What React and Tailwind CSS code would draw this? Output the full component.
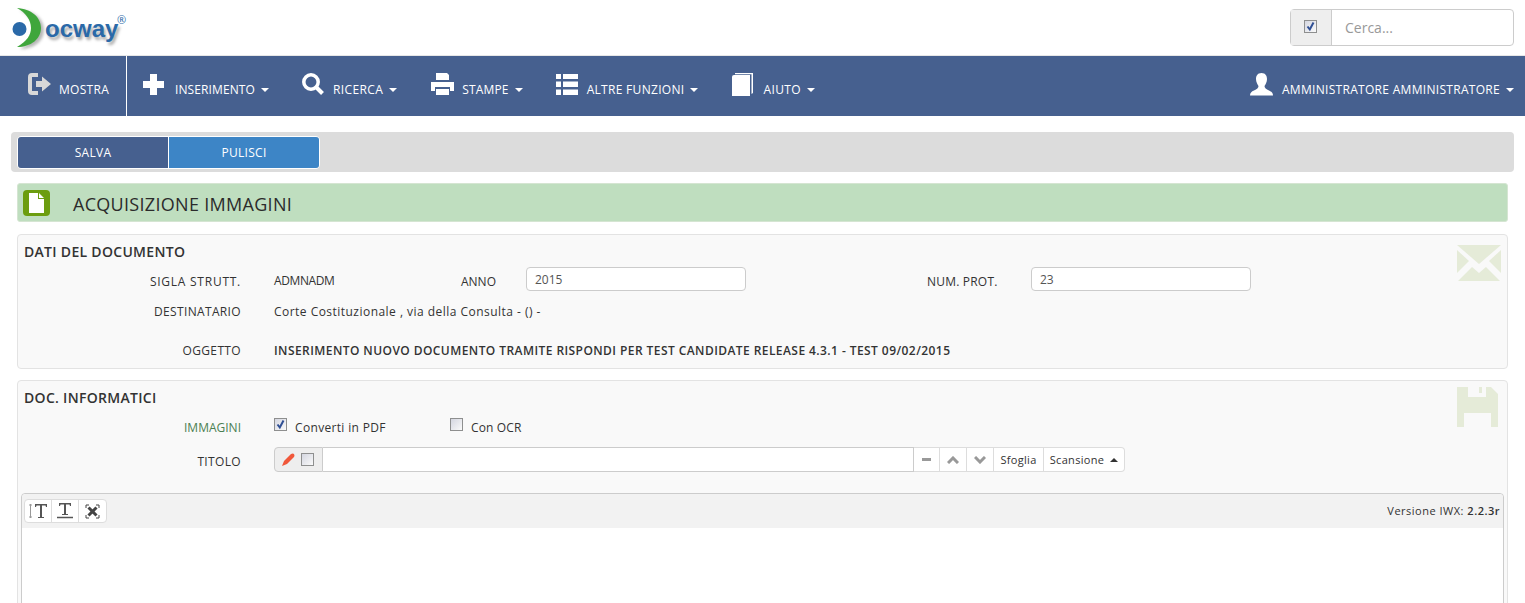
const font = "font-['Open_Sans','Noto_Sans',sans-serif]";

function Caret({ up }) {
  return (
    <span
      className={`ml-[6px] inline-block h-0 w-0 border-x-[4px] border-x-transparent ${
        up ? 'border-b-[4px] border-b-[#333]' : 'border-t-[4px] border-t-white'
      }`}
    />
  );
}

function Logo() {
  return (
    <div className="relative h-[55px] w-[130px]">
      <svg width="130" height="55" viewBox="0 0 130 55" className="absolute left-0 top-0">
        <defs>
          <filter id="logoShadow" x="-20%" y="-20%" width="140%" height="140%">
            <feGaussianBlur stdDeviation="1.6" />
          </filter>
        </defs>
        <path d="M20 10 C34 11 44 19 44 30 C44 41 34 49 20 49 C30 43 34 37 34 30 C34 22 29 15 20 10Z" fill="#999" filter="url(#logoShadow)" opacity="0.7" />
        <path d="M17 8 C31 9 41 17 41 28 C41 39 31 47 17 47 C27 41 31 35 31 28 C31 20 26 13 17 8Z" fill="#3fa63c" />
        <circle cx="19.500" cy="29" r="7" fill="#2a69a8" />
      </svg>
      <span className="absolute left-[45px] top-[16px] font-['Liberation_Sans',sans-serif] text-[24px] font-bold leading-[26px] text-[#2a69a8] [text-shadow:2px_3px_3px_#aaa]">
        ocway
      </span>
      <span className="absolute left-[117px] top-[14px] text-[11px] leading-[12px] text-[#2a69a8]">®</span>
    </div>
  );
}

function NavIcon({ children, className }) {
  return <span className={`-mt-[4px] flex h-[30px] items-center justify-center ${className}`}>{children}</span>;
}

function NavItem({ icon, label, className, textClass, caret = true }) {
  return (
    <div className={`flex items-center ${className}`}>
      {icon}
      <span className={`mt-[8px] flex items-center text-[12px] leading-[16px] text-white ${textClass}`}>
        {label}
        {caret && <Caret />}
      </span>
    </div>
  );
}

function Checkbox({ checked, className = '' }) {
  return (
    <span className={`flex h-[13px] w-[13px] items-center justify-center border border-[#8e8f8f] bg-gradient-to-br from-[#d4d6e0] to-[#fafafa] ${className}`}>
      {checked && (
        <svg width="11" height="11" viewBox="0 0 11 11">
          <path d="M2.500 5.500 L4.800 8.500 L8.500 1.500" fill="none" stroke="#2f4f94" strokeWidth="2" />
        </svg>
      )}
    </span>
  );
}

function Label({ children, className = 'text-[#333] tracking-[0.35px]' }) {
  return <div className={`w-[223px] shrink-0 text-right text-[12px] leading-[16px] ${className}`}>{children}</div>;
}

function ValueInput({ value }) {
  return (
    <div className="flex h-[24px] w-[220px] items-center rounded-[4px] border border-[#ccc] bg-white px-[8px] pt-[1px] text-[12px] text-[#555]">
      {value}
    </div>
  );
}

function SmallBtn({ children, className = '' }) {
  return (
    <div className={`flex h-[25px] items-center justify-center border-y border-r border-[#ddd] bg-white ${className}`}>
      {children}
    </div>
  );
}

export default function App() {
  return (
    <div className={`h-screen overflow-hidden bg-white text-[#333] ${font}`}>
      <header className="flex h-[56px] items-start justify-between border-b border-[#e7e7e7] pr-[11px]">
        <Logo />
        <div className="mt-[9px] flex h-[37px] w-[224px] rounded-[4px] border border-[#ccc]">
          <div className="flex w-[41px] items-center justify-center border-r border-[#ccc] bg-[#eee] pb-[3px] pr-[2px]">
            <Checkbox checked />
          </div>
          <div className="flex flex-1 items-center pl-[13px] text-[14px] text-[#999]">Cerca...</div>
        </div>
      </header>

      <nav className="flex h-[60px] items-center justify-between bg-[#46608f] pr-[11px]">
        <div className="flex h-full items-center">
          <div className="flex h-full w-[127px] items-center border-r border-white pl-[27px]">
            <NavItem
              label="MOSTRA"
              caret={false}
              textClass="tracking-[0.3px]"
              icon={
                <NavIcon className="mr-[7px]">
                  <svg width="25" height="22" viewBox="0 0 25 22">
                    <path d="M11 2H5Q3 2 3 4V18Q3 20 5 20H11" fill="none" stroke="#d8d8d8" strokeWidth="4" />
                    <path d="M9 8H15V3.500L24 11L15 18.500V14H9Z" fill="#d8d8d8" />
                  </svg>
                </NavIcon>
              }
            />
          </div>
          <NavItem
            className="ml-[16px]"
            label="INSERIMENTO"
            textClass="tracking-[0.1px]"
            icon={
              <NavIcon className="mr-[11px]">
                <svg width="21" height="21" viewBox="0 0 21 21" fill="#fff">
                  <path d="M7 0H14V7H21V14H14V21H7V14H0V7H7Z" />
                </svg>
              </NavIcon>
            }
          />
          <NavItem
            className="ml-[32px]"
            label="RICERCA"
            textClass="tracking-[0.4px]"
            icon={
              <NavIcon className="mr-[9px]">
                <svg width="23" height="22" viewBox="0 0 23 22" fill="none" stroke="#fff">
                  <circle cx="10" cy="9" r="7.200" strokeWidth="3.500" />
                  <path d="M15.500 14.500L21.500 20.500" strokeWidth="4" />
                </svg>
              </NavIcon>
            }
          />
          <NavItem
            className="ml-[34px]"
            label="STAMPE"
            textClass="tracking-[0.15px]"
            icon={
              <NavIcon className="mr-[8px]">
                <svg width="23" height="22" viewBox="0 0 23 22" fill="#fff">
                  <path d="M5 0H16L18 2V7H5Z" />
                  <path d="M0 9H23V18H19V14H4V18H0Z" />
                  <path d="M5 16H18V22H5Z" />
                </svg>
              </NavIcon>
            }
          />
          <NavItem
            className="ml-[33px]"
            label="ALTRE FUNZIONI"
            textClass="tracking-[0.3px]"
            icon={
              <NavIcon className="mr-[9px]">
                <svg width="22" height="21" viewBox="0 0 22 21" fill="#fff">
                  <path d="M0 0H5V5H0ZM7 0H22V5H7ZM0 7.500H5V13H0ZM7 7.500H22V13H7ZM0 15.500H5V21H0ZM7 15.500H22V21H7Z" />
                </svg>
              </NavIcon>
            }
          />
          <NavItem
            className="ml-[34px]"
            label="AIUTO"
            textClass="tracking-[0.4px]"
            icon={
              <NavIcon className="mr-[10px]">
                <svg width="21" height="23" viewBox="0 0 21 23" fill="#fff">
                  <path d="M0 4Q0 2 2 2H18V23H0Z" />
                  <path d="M3 0H21V20L19.500 21V1.200H3Z" />
                </svg>
              </NavIcon>
            }
          />
        </div>
        <NavItem
          label="AMMINISTRATORE AMMINISTRATORE"
          textClass="tracking-[0.3px]"
          icon={
            <NavIcon className="mr-[9px]">
              <svg width="23" height="23" viewBox="0 0 23 23" fill="#fff">
                <path d="M11.500 0C7.500 0 6 3 6 6C6 9 7.500 11.500 8.500 13C8.500 15 7 16 4 17.500C1.500 18.500 0 20 0 22.500H23C23 20 21.500 18.500 19 17.500C16 16 14.500 15 14.500 13C15.500 11.500 17 9 17 6C17 3 15.500 0 11.500 0Z" />
              </svg>
            </NavIcon>
          }
        />
      </nav>

      <div className="mx-[11px] mt-[16px] flex h-[40px] w-[1503px] items-start rounded-[4px] bg-[#dcdcdc] pl-[6px] pt-[4px]">
        <div className="flex h-[33px] w-[303px] overflow-hidden rounded-[4px] border border-white pt-0 text-[12px] tracking-[0.3px] text-white">
          <div className="flex w-[151px] items-center justify-center border-r border-white bg-[#46608f] pt-[1px]">SALVA</div>
          <div className="flex flex-1 items-center justify-center bg-[#3d85c6] pt-[1px]">PULISCI</div>
        </div>
      </div>

      <main className="mx-[17px] w-[1491px]">
        <div className="mt-[11px] flex h-[39px] items-center rounded-[3px] border border-[#d5e5d2] bg-[#bfdebf] pl-[5px]">
          <div className="flex h-[26px] w-[27px] items-center justify-center rounded-[4px] bg-[#6c9d0f]">
            <svg width="15" height="20" viewBox="0 0 15 20">
              <path d="M0 0H9V6H15V20H0ZM10 0L15 5H10Z" fill="#fff" />
            </svg>
          </div>
          <h1 className="ml-[23px] mt-[2px] text-[18px] leading-[24px] tracking-[0.3px] text-[#2b2b2b]">ACQUISIZIONE IMMAGINI</h1>
        </div>

        <section className="relative mt-[12px] h-[135px] rounded-[4px] border border-[#e3e3e3] bg-[#f9f9f9]">
          <svg width="44" height="36" viewBox="0 0 44 36" className="absolute right-[6px] top-[10px]" fill="#e5ebd8">
            <path d="M0 0H44L22 19Z" />
            <path d="M0 5L12 16L0 28Z" />
            <path d="M44 5L32 16L44 28Z" />
            <path d="M1 36L15 22L22 28L29 22L43 36Z" />
          </svg>
          <h2 className="pl-[6px] pt-[8px] text-[14px] font-semibold leading-[18px] tracking-[0.3px] text-[#333]">DATI DEL DOCUMENTO</h2>
          <div className="mt-[6px] flex h-[24px] items-center">
            <Label className="pt-[5px] tracking-[0.75px] text-[#333]">SIGLA STRUTT.</Label>
            <span className="ml-[33px] w-[187px] pt-[4px] text-[12px] leading-[16px] tracking-[-0.4px]">ADMNADM</span>
            <span className="w-[65px] pt-[6px] text-[12px] leading-[16px]">ANNO</span>
            <ValueInput value="2015" />
            <span className="ml-[181px] w-[104px] pt-[6px] text-[12px] leading-[16px] tracking-[0.2px]">NUM. PROT.</span>
            <ValueInput value="23" />
          </div>
          <div className="mt-[12px] flex items-center">
            <Label>DESTINATARIO</Label>
            <span className="ml-[33px] text-[12px] tracking-[0.47px]">Corte Costituzionale , via della Consulta - () -</span>
          </div>
          <div className="mt-[21px] flex items-center">
            <Label>OGGETTO</Label>
            <span className="ml-[33px] text-[12px] font-semibold tracking-[0.43px]">
              INSERIMENTO NUOVO DOCUMENTO TRAMITE RISPONDI PER TEST CANDIDATE RELEASE 4.3.1 - TEST 09/02/2015
            </span>
          </div>
        </section>

        <section className="relative mt-[11px] h-[300px] rounded-[4px] border border-[#e3e3e3] bg-[#f9f9f9]">
          <svg width="41" height="40" viewBox="0 0 41 40" className="absolute right-[9px] top-[6px]" fill="#e5ebd8">
            <path d="M0 0H11V10H29V0H34L41 7V40H34V26H7V40H0Z" />
            <path d="M22 0H25V6H22Z" />
          </svg>
          <h2 className="pl-[6px] pt-[8px] text-[14px] font-semibold leading-[18px] tracking-[0.3px] text-[#333]">DOC. INFORMATICI</h2>
          <div className="mt-[12px] flex items-center">
            <Label className="text-[#4b7f52]">IMMAGINI</Label>
            <div className="ml-[33px] flex items-center">
              <Checkbox checked className="-mt-[7px]" />
              <span className="ml-[8px] w-[155px] text-[12px] tracking-[0.33px]">Converti in PDF</span>
              <Checkbox className="-mt-[7px]" />
              <span className="ml-[8px] text-[12px] tracking-[0.15px]">Con OCR</span>
            </div>
          </div>
          <div className="mt-[10px] flex items-center">
            <Label className="pt-[4px] tracking-[0.35px] text-[#333]">TITOLO</Label>
            <div className="ml-[33px] flex items-center">
              <div className="flex h-[25px] w-[49px] items-center gap-[6px] rounded-l-[4px] border border-[#ccc] bg-[#eee] pl-[7px]">
                <svg width="13" height="13" viewBox="0 0 13 13">
                  <path d="M0 13L2 8L9 1Q11 0 12 1Q13 3 12 4L5 11Z" fill="#f0573a" />
                </svg>
                <Checkbox />
              </div>
              <div className="h-[25px] w-[591px] border-y border-r border-[#ccc] bg-white" />
              <SmallBtn className="w-[26px]">
                <span className="h-[3px] w-[9px] bg-[#999]" />
              </SmallBtn>
              <SmallBtn className="w-[27px]">
                <svg width="12" height="8" viewBox="0 0 12 8">
                  <path d="M1 7L6 2L11 7" fill="none" stroke="#999" strokeWidth="3" />
                </svg>
              </SmallBtn>
              <SmallBtn className="w-[27px]">
                <svg width="12" height="8" viewBox="0 0 12 8">
                  <path d="M1 1L6 6L11 1" fill="none" stroke="#999" strokeWidth="3" />
                </svg>
              </SmallBtn>
              <SmallBtn className="w-[50px] border-l-[#ccc] pt-[1px] text-[11px] tracking-[0.3px]">Sfoglia</SmallBtn>
              <SmallBtn className="w-[81px] rounded-r-[4px] border-[#ccc] pt-[1px] text-[11px] tracking-[0.3px]">
                Scansione
                <Caret up />
              </SmallBtn>
            </div>
          </div>

          <div className="mx-[3px] mt-[21px] h-[200px] rounded-t-[4px] border border-[#ccc] bg-white">
            <div className="flex h-[34px] items-start justify-between rounded-t-[4px] bg-[#f2f2f2] pl-[2px] pr-[3px] pt-[5px]">
              <div className="flex h-[24px] rounded-[4px] border border-[#ddd] bg-white">
                <div className="flex w-[27px] items-center justify-center border-r border-[#ddd]">
                  <svg width="20" height="16" viewBox="0 0 20 16">
                    <path d="M2.500 1V15M1 2H4M1 14H4" fill="none" stroke="#999" />
                    <path d="M7 1H19V4H18L17.500 2.500H14V14H16V15H10V14H12V2.500H8.500L8 4H7Z" fill="#555" />
                  </svg>
                </div>
                <div className="flex w-[27px] items-center justify-center border-r border-[#ddd]">
                  <svg width="18" height="16" viewBox="0 0 18 16">
                    <path d="M3 0H15V3H14L13.500 1.500H10V11H12V12H6V11H8V1.500H4.500L4 3H3Z" fill="#555" />
                    <path d="M1 14.500H17" stroke="#555" strokeWidth="1.500" />
                  </svg>
                </div>
                <div className="flex w-[27px] items-center justify-center">
                  <svg width="15" height="15" viewBox="0 0 15 15" fill="none" stroke="#444">
                    <path d="M1 4V1H4M11 1H14V4M14 11V14H11M4 14H1V11" />
                    <path d="M3.500 3.500L11.500 11.500M11.500 3.500L3.500 11.500" strokeWidth="3" />
                  </svg>
                </div>
              </div>
              <div className="pt-[4px] text-[11px] leading-[16px] tracking-[0.5px]">
                Versione IWX: <span className="font-semibold">2.2.3r</span>
              </div>
            </div>
          </div>
        </section>
      </main>
    </div>
  );
}
